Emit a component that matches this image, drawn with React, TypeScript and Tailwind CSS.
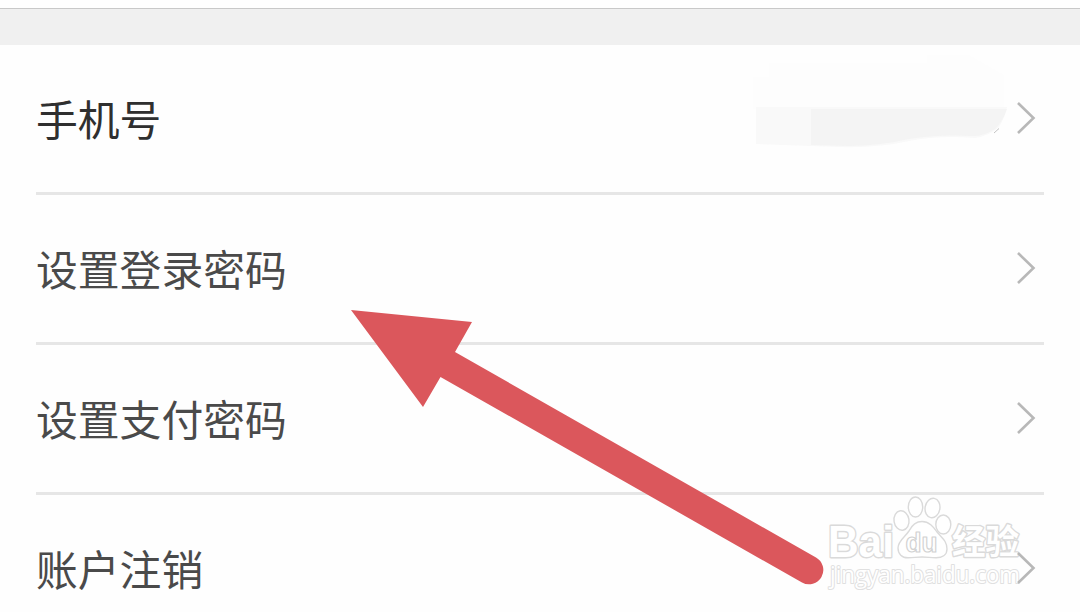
interface Row {
  id: string
  label: string
  tone: string
  masked?: boolean
}

const ROWS: Row[] = [
  { id: 'phone', label: '手机号', tone: 'text-[#2f2f2f]', masked: true },
  { id: 'login-password', label: '设置登录密码', tone: 'text-[#4a4a4a]' },
  { id: 'pay-password', label: '设置支付密码', tone: 'text-[#4a4a4a]' },
  { id: 'close-account', label: '账户注销', tone: 'text-[#4a4a4a]' },
]

function Chevron() {
  return (
    <svg width="20" height="34" viewBox="0 0 20 34" fill="none" stroke="#b8b8b8" strokeWidth="2.6">
      <path d="M2 2 L17.5 17 L2 32" />
    </svg>
  )
}

// Smudge that hides the phone number
function MaskedNumber() {
  return (
    <svg className="mr-[5px] mb-[29px]" width="262" height="96" viewBox="0 0 262 96" fill="none">
      <path d="M4 22H20V8H178V0H220L255 20V54H4Z" fill="#fdfdfd" />
      <path d="M7 52H258Q256 62 250 72Q240 81 226 83Q190 80 160 86Q130 93 90 92L7 89Z" fill="#f9f9f9" />
      <path d="M62 54H258Q254 66 246 74Q234 82 222 81Q190 79 160 84Q130 91 100 91L62 90Z" fill="#f4f4f4" />
      <path d="M245 78L250 73.500" stroke="#c4c4c4" strokeWidth="1" />
    </svg>
  )
}

function SettingRow({ label, tone, masked }: Row) {
  return (
    <li className="flex h-[150px] shrink-0 items-center justify-between border-b-[3px] border-[#e6e6e6]">
      <span className={`pt-px text-[41.8px] leading-none ${tone}`}>{label}</span>
      <span className="mb-0.5 flex h-[34px] items-center pr-2">
        {masked && <MaskedNumber />}
        <Chevron />
      </span>
    </li>
  )
}

function Arrow() {
  return (
    <svg className="absolute left-[340px] top-[300px]" width="500" height="300" viewBox="340 300 500 300">
      <path
        d="M351 310L472 322L455 352L816 557.500A14.200 14.200 0 0 1 802 582.500L440.500 377L423 407Z"
        fill="#db575c"
      />
    </svg>
  )
}

function Watermark() {
  return (
    <svg
      className="absolute left-[820px] top-[490px]"
      width="210"
      height="110"
      viewBox="820 490 210 110"
      fill="#ffffff"
      stroke="#dadada"
      strokeWidth="1.4"
      strokeLinejoin="round"
    >
      <text
        x="828"
        y="556.500"
        fontFamily="'Liberation Sans', sans-serif"
        fontWeight="700"
        fontSize="44"
        textLength="66"
        lengthAdjust="spacingAndGlyphs"
        paintOrder="stroke"
        strokeWidth="2.800"
      >
        Bai
      </text>
      <ellipse cx="901.500" cy="520.500" rx="7.500" ry="9.800" transform="rotate(-8 901.500 520.500)" />
      <ellipse cx="915.500" cy="507" rx="7.200" ry="10" />
      <ellipse cx="932.500" cy="508" rx="7.400" ry="9.800" transform="rotate(10 932.500 508)" />
      <ellipse cx="943.300" cy="524.500" rx="7.500" ry="9.500" />
      <path d="M922 521.500C930 521.500 934 528 937 532C942 538 947 541 947 549C947 555 942 557.800 936 557.800C930 557.800 928 557 922 557C916 557 914 557.800 908 557.800C902 557.800 898 554 898 548C898 541 905 537 909 531C912 525 916 521.500 922 521.500Z" />
      <text
        x="905.500"
        y="552"
        fontFamily="'Liberation Sans', sans-serif"
        fontWeight="700"
        fontSize="27"
        textLength="32"
        lengthAdjust="spacingAndGlyphs"
        stroke="#d2d2d2"
        strokeWidth="1.200"
      >
        du
      </text>
      <text
        x="952"
        y="554"
        fontFamily="'Noto Sans CJK SC', sans-serif"
        fontWeight="700"
        fontSize="34"
        textLength="67"
        lengthAdjust="spacingAndGlyphs"
        paintOrder="stroke"
        strokeWidth="2.800"
      >
        经验
      </text>
      <text
        x="830"
        y="582.500"
        fontFamily="'Open Sans', 'Noto Sans', sans-serif"
        fontSize="23"
        textLength="190"
        lengthAdjust="spacingAndGlyphs"
        paintOrder="stroke"
        stroke="#e0e0e0"
        strokeWidth="2"
      >
        jingyan.baidu.com
      </text>
    </svg>
  )
}

export default function App() {
  return (
    <main className="relative flex h-[612px] w-[1080px] flex-col overflow-hidden bg-[#fefefe] font-['Noto_Sans_CJK_SC',sans-serif]">
      <div className="mt-2 h-[37px] shrink-0 border-t border-[#c8c8c8] bg-[#f0f0f0]" />
      <ul className="relative z-10 flex flex-col px-9">
        {ROWS.map((row) => (
          <SettingRow key={row.id} {...row} />
        ))}
      </ul>
      <Watermark />
      <div className="absolute inset-0 z-20">
        <Arrow />
      </div>
    </main>
  )
}
